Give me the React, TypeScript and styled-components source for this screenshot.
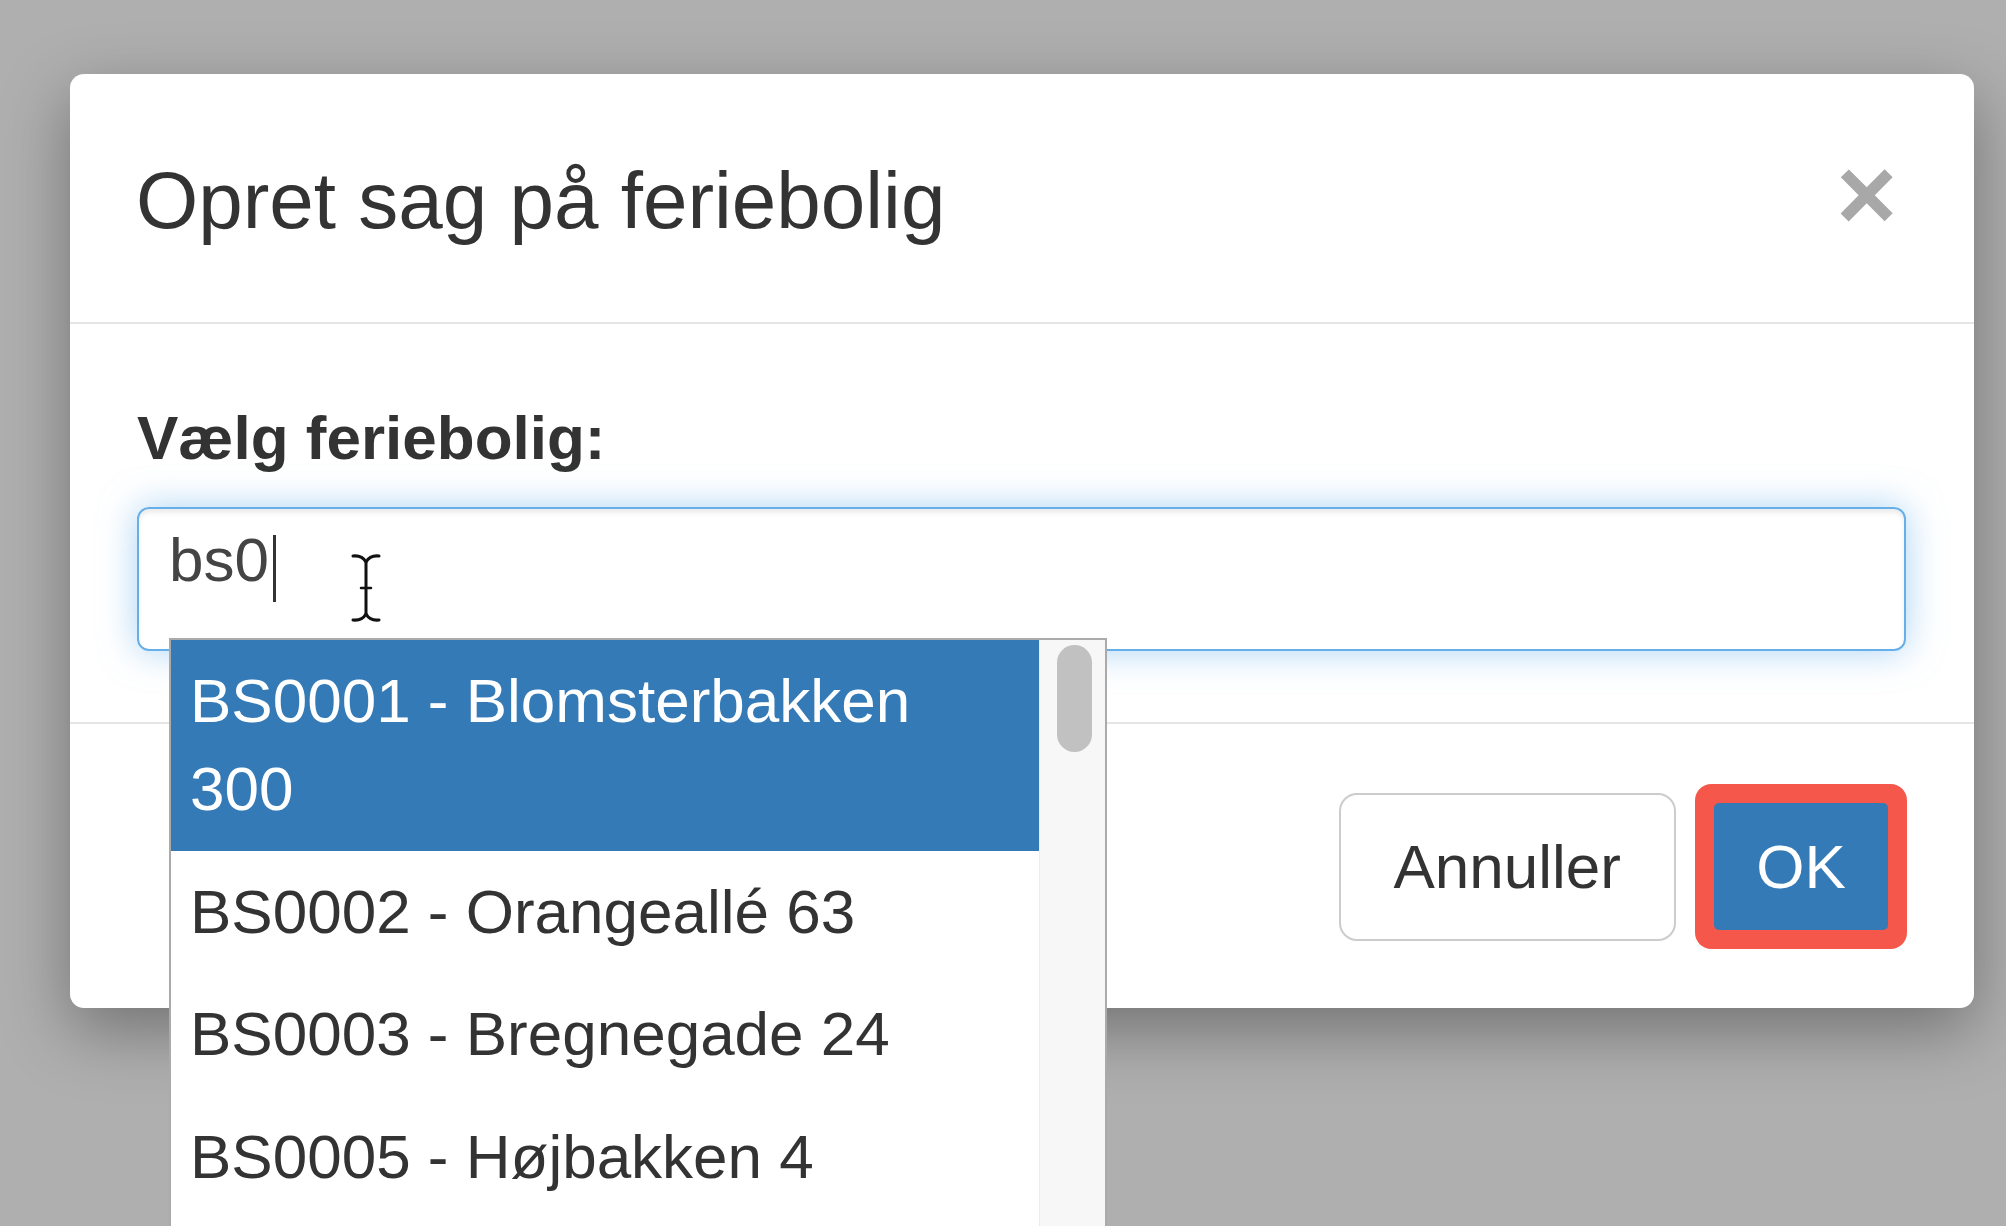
import React from 'react';
import styled, { createGlobalStyle } from 'styled-components';

const GlobalStyle = createGlobalStyle`
    html, body {
        margin: 0;
        padding: 0;
        background: #afafaf;
        overflow: hidden;
    }

    body {
        height: 1226px;
        font-family: "Liberation Sans", Arial, Helvetica, sans-serif;
        color: #333;
    }
`;

const Backdrop = styled.div`
    height: 1226px;
    padding: 74px 0 0 70px;
    box-sizing: border-box;
`;

const Modal = styled.div`
    width: 1904px;
    background: #fff;
    border-radius: 14px;
    box-shadow: 0 22px 67px rgba(0, 0, 0, 0.35);
`;

const Header = styled.div`
    display: flex;
    justify-content: space-between;
    align-items: flex-start;
    padding: 70px 77px 64px 66px;
    border-bottom: 2px solid #e5e5e5;
`;

const Title = styled.h4`
    margin: 0;
    font-size: 80px;
    font-weight: 400;
    line-height: 114px;
    color: #333;
`;

const CloseButton = styled.button`
    margin: -2px 0 0;
    padding: 0;
    border: 0;
    background: transparent;
    font-family: inherit;
    font-size: 104px;
    font-weight: 700;
    line-height: 1;
    color: #a8a8a8;
    cursor: pointer;
`;

const Body = styled.div`
    padding: 70px 68px 71px 67px;
`;

const Label = styled.label`
    display: block;
    margin-bottom: 24px;
    font-size: 62px;
    font-weight: 700;
    line-height: 88.6px;
`;

const Field = styled.div`
    position: relative;
    height: 144px;
    box-sizing: border-box;
    display: flex;
    align-items: flex-start;
    padding: 7px 25px 0 30px;
    border: 2px solid #66afe9;
    border-radius: 12px;
    box-shadow: inset 0 4px 4px rgba(0, 0, 0, 0.075), 0 0 36px rgba(102, 175, 233, 0.55);
    font-size: 62px;
    line-height: 88.6px;
    color: #444;
`;

const Caret = styled.span`
    width: 3px;
    height: 67px;
    margin: 19px 0 0 4px;
    background: #333;
`;

const IBeam = styled.svg`
    position: absolute;
    left: 210px;
    top: 43px;
    width: 34px;
    height: 72px;
`;

const Suggestions = styled.div`
    position: absolute;
    top: 129px;
    left: 30px;
    z-index: 5;
    width: 938px;
    height: 640px;
    box-sizing: border-box;
    display: flex;
    border: 2px solid #aaa;
    background: #fff;
`;

const SuggestionList = styled.ul`
    flex: 1;
    margin: 0;
    padding: 0;
    list-style: none;
`;

const SuggestionItem = styled.li<{ $active?: boolean }>`
    padding: 17px 20px 17px 19px;
    font-size: 62px;
    line-height: 88.6px;
    color: ${p => (p.$active ? '#fff' : '#333')};
    background: ${p => (p.$active ? '#337ab7' : '#fff')};
`;

const ScrollTrack = styled.div`
    width: 66px;
    box-sizing: border-box;
    padding: 5px 0 0 17px;
    background: #f7f7f7;
    border-left: 1px solid #ececec;
`;

const ScrollThumb = styled.div`
    width: 35px;
    height: 107px;
    border-radius: 18px;
    background: #c1c1c1;
`;

const Footer = styled.div`
    display: flex;
    justify-content: flex-end;
    align-items: center;
    gap: 38px;
    padding: 69px 86px 67px;
    border-top: 2px solid #e5e5e5;
`;

const Button = styled.button<{ $primary?: boolean }>`
    box-sizing: border-box;
    margin: 0;
    font-family: inherit;
    font-size: 62px;
    line-height: 88.6px;
    cursor: pointer;
    color: ${p => (p.$primary ? '#fff' : '#333')};
    background: ${p => (p.$primary ? '#337ab7' : '#fff')};
    border: ${p => (p.$primary ? '0' : '2px solid #ccc')};
    border-radius: ${p => (p.$primary ? '5px' : '18px')};
    padding: ${p => (p.$primary ? '19px 40px' : '28px 53px')};
    width: ${p => (p.$primary ? '174px' : 'auto')};
    height: ${p => (p.$primary ? '127px' : 'auto')};
    /* red annotation ring around the highlighted button */
    box-shadow: ${p => (p.$primary ? '0 0 0 19px #f5574b' : 'none')};
`;

const boliger = [
    'BS0001 - Blomsterbakken 300',
    'BS0002 - Orangeallé 63',
    'BS0003 - Bregnegade 24',
    'BS0005 - Højbakken 4',
];

const App: React.FC = () => {
    return (
        <>
            <GlobalStyle />
            <Backdrop>
                <Modal>
                    <Header>
                        <Title>Opret sag på feriebolig</Title>
                        <CloseButton aria-label="Luk">×</CloseButton>
                    </Header>

                    <Body>
                        <Label>Vælg feriebolig:</Label>
                        <Field>
                            <span>bs0</span>
                            <Caret />
                            <IBeam viewBox="0 0 34 72">
                                <g fill="none" stroke="#111" strokeWidth="3" strokeLinecap="round">
                                    <path d="M4 4 Q13 3 17 10 Q21 3 30 4" />
                                    <path d="M17 10 V62" />
                                    <path d="M12 36 H22" strokeWidth="2.5" />
                                    <path d="M4 68 Q13 69 17 62 Q21 69 30 68" />
                                </g>
                            </IBeam>

                            <Suggestions>
                                <SuggestionList>
                                    {boliger.map((b, i) => (
                                        <SuggestionItem key={b} $active={i === 0}>
                                            {i === 0 ? <>BS0001 - Blomsterbakken<br />300</> : b}
                                        </SuggestionItem>
                                    ))}
                                </SuggestionList>
                                <ScrollTrack>
                                    <ScrollThumb />
                                </ScrollTrack>
                            </Suggestions>
                        </Field>
                    </Body>

                    <Footer>
                        <Button>Annuller</Button>
                        <Button $primary>OK</Button>
                    </Footer>
                </Modal>
            </Backdrop>
        </>
    );
};

export default App;
